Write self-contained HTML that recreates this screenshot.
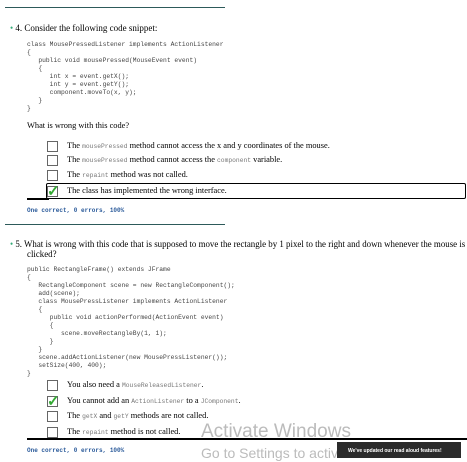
<!DOCTYPE html>
<html><head><meta charset="utf-8"><style>
body{margin:0;width:467px;height:458px;overflow:hidden;background:#fff;position:relative;font-family:"Liberation Serif",serif;color:#000}
.a{position:absolute;white-space:pre;line-height:10px}
.c{position:absolute;white-space:pre;font-family:"Liberation Mono",monospace;font-size:6.3px;color:#444;line-height:8px;left:27px}
.t{font-size:8.4px}
.m{font-family:"Liberation Mono",monospace;font-size:6.3px;color:#777}
.hr{position:absolute;left:5px;width:220px;height:1px;background:#2d5a5a}
.cb{position:absolute;left:47px;width:9px;height:9px;border:1px solid #666;background:#fff}
.ok{position:absolute;font-family:"Liberation Mono",monospace;font-size:6px;color:#2a5a9a;font-weight:bold;left:27px}
.ck{position:absolute;left:47px;color:#3a3;font-size:15px;font-weight:bold;line-height:14px}
</style></head><body>
<div class="hr" style="top:7px"></div>
<div class="a t" style="left:10px;top:23px;font-size:9px"><span style="color:#3a7">•</span> 4. Consider the following code snippet:</div>
<div class="c" style="top:41px">class MousePressedListener implements ActionListener
{
   public void mousePressed(MouseEvent event)
   {
      int x = event.getX();
      int y = event.getY();
      component.moveTo(x, y);
   }
}</div>
<div class="a t" style="left:27px;top:121px">What is wrong with this code?</div>
<div class="cb" style="top:141px"></div><div class="a t" style="left:67px;top:141px">The <span class="m">mousePressed</span> method cannot access the x and y coordinates of the mouse.</div>
<div class="cb" style="top:155px"></div><div class="a t" style="left:67px;top:155px">The <span class="m">mousePressed</span> method cannot access the <span class="m">component</span> variable.</div>
<div class="cb" style="top:170px"></div><div class="a t" style="left:67px;top:170px">The <span class="m">repaint</span> method was not called.</div>
<div style="position:absolute;left:46px;top:183px;width:418px;height:14px;border:1.5px solid #000;border-radius:2px"></div>
<div style="position:absolute;left:27px;top:198px;width:22px;height:1.5px;background:#000"></div>
<div class="cb" style="top:186px"></div><div class="ck" style="top:185px">✓</div>
<div class="a t" style="left:67px;top:186px">The class has implemented the wrong interface.</div>
<div class="ok" style="top:207px">One correct, 0 errors, 100%</div>
<div class="hr" style="top:224px"></div>
<div class="a t" style="left:10px;top:239px;font-size:8.9px"><span style="color:#3a7">•</span> 5. What is wrong with this code that is supposed to move the rectangle by 1 pixel to the right and down whenever the mouse is</div>
<div class="a t" style="left:27px;top:249px;font-size:8.9px">clicked?</div>
<div class="c" style="top:266px">public RectangleFrame() extends JFrame
{
   RectangleComponent scene = new RectangleComponent();
   add(scene);
   class MousePressListener implements ActionListener
   {
      public void actionPerformed(ActionEvent event)
      {
         scene.moveRectangleBy(1, 1);
      }
   }
   scene.addActionListener(new MousePressListener());
   setSize(400, 400);
}</div>
<div class="cb" style="top:380px"></div><div class="a t" style="left:67px;top:380px">You also need a <span class="m">MouseReleasedListener</span>.</div>
<div class="cb" style="top:396px"></div><div class="ck" style="top:395px">✓</div><div class="a t" style="left:67px;top:396px">You cannot add an <span class="m">ActionListener</span> to a <span class="m">JComponent</span>.</div>
<div class="cb" style="top:411px"></div><div class="a t" style="left:67px;top:411px">The <span class="m">getX</span> and <span class="m">getY</span> methods are not called.</div>
<div class="cb" style="top:427px"></div><div class="a t" style="left:67px;top:427px">The <span class="m">repaint</span> method is not called.</div>
<div class="a" style="left:201px;top:421px;font-family:'Liberation Sans',sans-serif;font-size:19px;line-height:22px;color:#bbb">Activate Windows</div>
<div style="position:absolute;left:27px;top:438px;width:440px;height:1.5px;background:#000"></div>
<div class="ok" style="top:447px">One correct, 0 errors, 100%</div>
<div class="a" style="left:201px;top:444px;font-family:'Liberation Sans',sans-serif;font-size:14px;line-height:18px;color:#bbb">Go to Settings to activate Windows</div>
<div style="position:absolute;left:337px;top:442px;width:124px;height:16px;background:#2b2b2b"></div>
<div class="a" style="left:348px;top:446px;font-family:'Liberation Sans',sans-serif;font-size:5px;color:#fff;font-weight:bold">We've updated our read aloud features!</div>
</body></html>
